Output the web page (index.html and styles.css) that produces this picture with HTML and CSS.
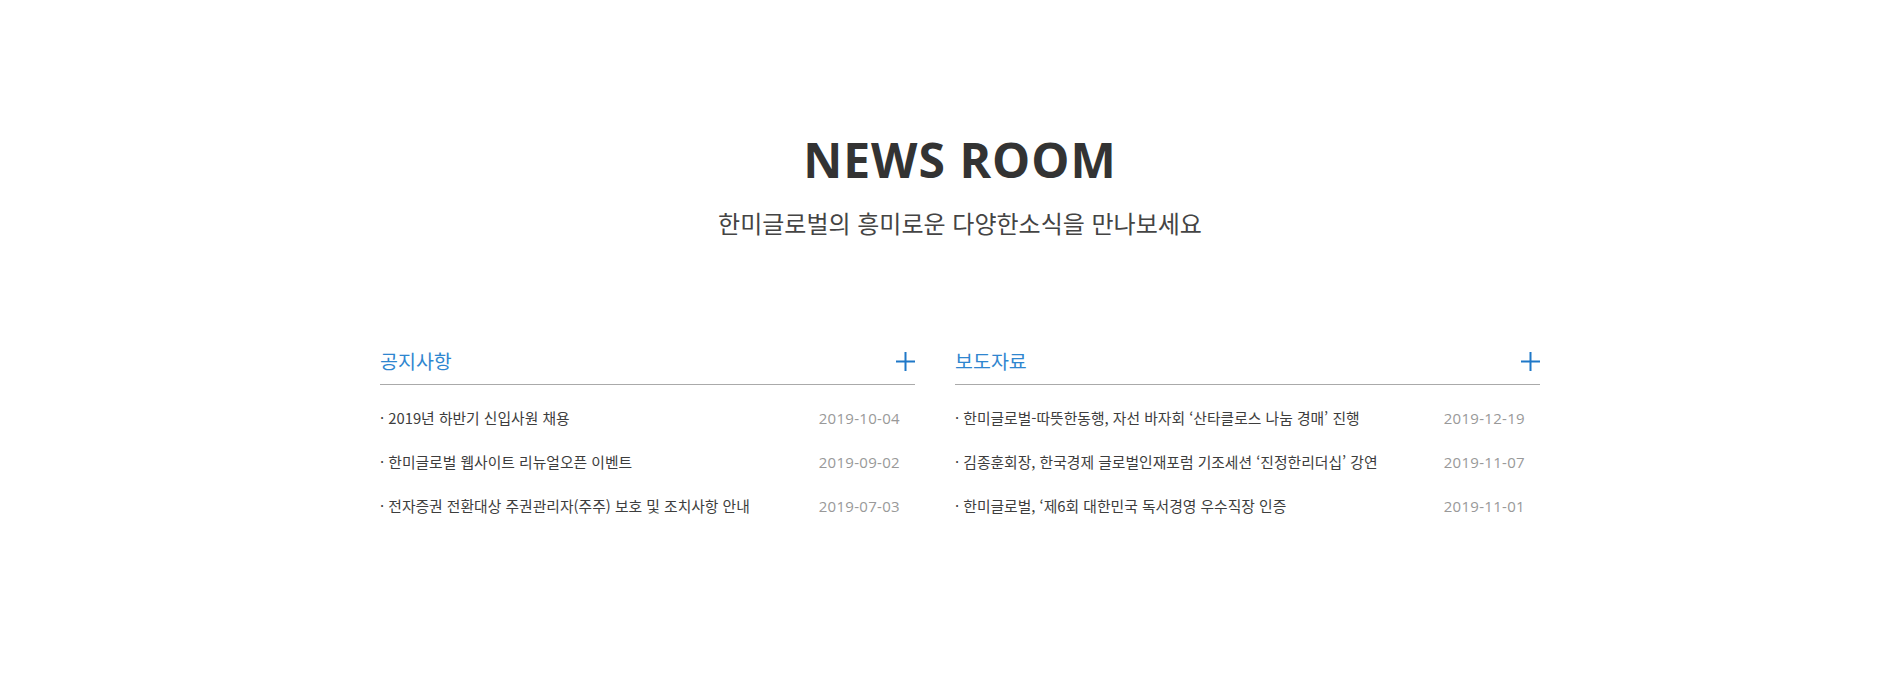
FILE: index.html
```html
<!DOCTYPE html>
<html lang="ko">
<head>
<meta charset="utf-8">
<title>NEWS ROOM</title>
<link rel="stylesheet" href="styles.css">
</head>
<body>
<div class="page">
  <section class="wrap">
    <header class="head">
      <h2 class="title">NEWS ROOM</h2>
      <p class="subtitle">한미글로벌의 흥미로운 다양한소식을 만나보세요</p>
    </header>
    <div class="news">
      <div class="board board-notice">
        <div class="board-head">
          <h3 class="board-title">공지사항</h3>
          <a class="more" href="#" aria-label="더보기">
            <svg width="19" height="19" viewBox="0 0 19 19"><path d="M9.5 0V19M0 9.5H19" stroke="#1f78c8" stroke-width="2" fill="none"/></svg>
          </a>
        </div>
        <ul class="list">
          <li class="item"><span class="subject">· 2019년 하반기 신입사원 채용</span><span class="date">2019-10-04</span></li>
          <li class="item"><span class="subject">· 한미글로벌 웹사이트 리뉴얼오픈 이벤트</span><span class="date">2019-09-02</span></li>
          <li class="item"><span class="subject">· 전자증권 전환대상 주권관리자(주주) 보호 및 조치사항 안내</span><span class="date">2019-07-03</span></li>
        </ul>
      </div>
      <div class="board board-press">
        <div class="board-head">
          <h3 class="board-title">보도자료</h3>
          <a class="more" href="#" aria-label="더보기">
            <svg width="19" height="19" viewBox="0 0 19 19"><path d="M9.5 0V19M0 9.5H19" stroke="#1f78c8" stroke-width="2" fill="none"/></svg>
          </a>
        </div>
        <ul class="list">
          <li class="item"><span class="subject">· 한미글로벌-따뜻한동행, 자선 바자회 ‘산타클로스 나눔 경매’ 진행</span><span class="date">2019-12-19</span></li>
          <li class="item"><span class="subject">· 김종훈회장, 한국경제 글로벌인재포럼 기조세션 ‘진정한리더십’ 강연</span><span class="date">2019-11-07</span></li>
          <li class="item"><span class="subject">· 한미글로벌, ‘제6회 대한민국 독서경영 우수직장 인증</span><span class="date">2019-11-01</span></li>
        </ul>
      </div>
    </div>
  </section>
</div>
</body>
</html>
```

FILE: styles.css
```css
html, body {
  margin: 0;
  padding: 0;
  background: #fff;
}
body {
  font-family: "Noto Sans CJK KR", "Open Sans", sans-serif;
  color: #333;
}
.page {
  padding-left: 17px;
}
.wrap {
  width: 1160px;
  margin: 0 auto;
  padding-top: 130px;
}
.head {
  text-align: center;
}
.title {
  margin: 0;
  font-family: "Open Sans", "Noto Sans", sans-serif;
  font-weight: 700;
  font-size: 48px;
  line-height: 60px;
  color: #333;
  letter-spacing: 1px;
}
.subtitle {
  margin: 18px 0 0;
  font-family: "Noto Sans CJK KR", sans-serif;
  font-size: 24px;
  line-height: 30px;
  color: #444;
}
.news {
  display: flex;
  gap: 40px;
  margin-top: 108px;
}
.board-notice {
  width: 535px;
}
.board-press {
  width: 585px;
}
.board-head {
  display: flex;
  justify-content: space-between;
  align-items: center;
  height: 30px;
  padding-bottom: 8px;
  border-bottom: 1px solid #aaa;
}
.board-title {
  margin: 0;
  font-family: "Noto Sans CJK KR", sans-serif;
  font-weight: 400;
  font-size: 19.5px;
  line-height: 30px;
  color: #2f86cf;
}
.more {
  display: flex;
  width: 19px;
  height: 19px;
}
.list {
  list-style: none;
  margin: 0;
  padding: 11px 0 0;
}
.item {
  display: flex;
  justify-content: space-between;
  align-items: center;
  height: 44px;
  padding-right: 15px;
}
.subject {
  font-family: "Noto Sans CJK KR", sans-serif;
  font-size: 14.8px;
  line-height: 20px;
  color: #3d3d3d;
}
.date {
  font-family: "Open Sans", sans-serif;
  font-size: 15px;
  line-height: 20px;
  letter-spacing: 0.3px;
  color: #999;
}
```
